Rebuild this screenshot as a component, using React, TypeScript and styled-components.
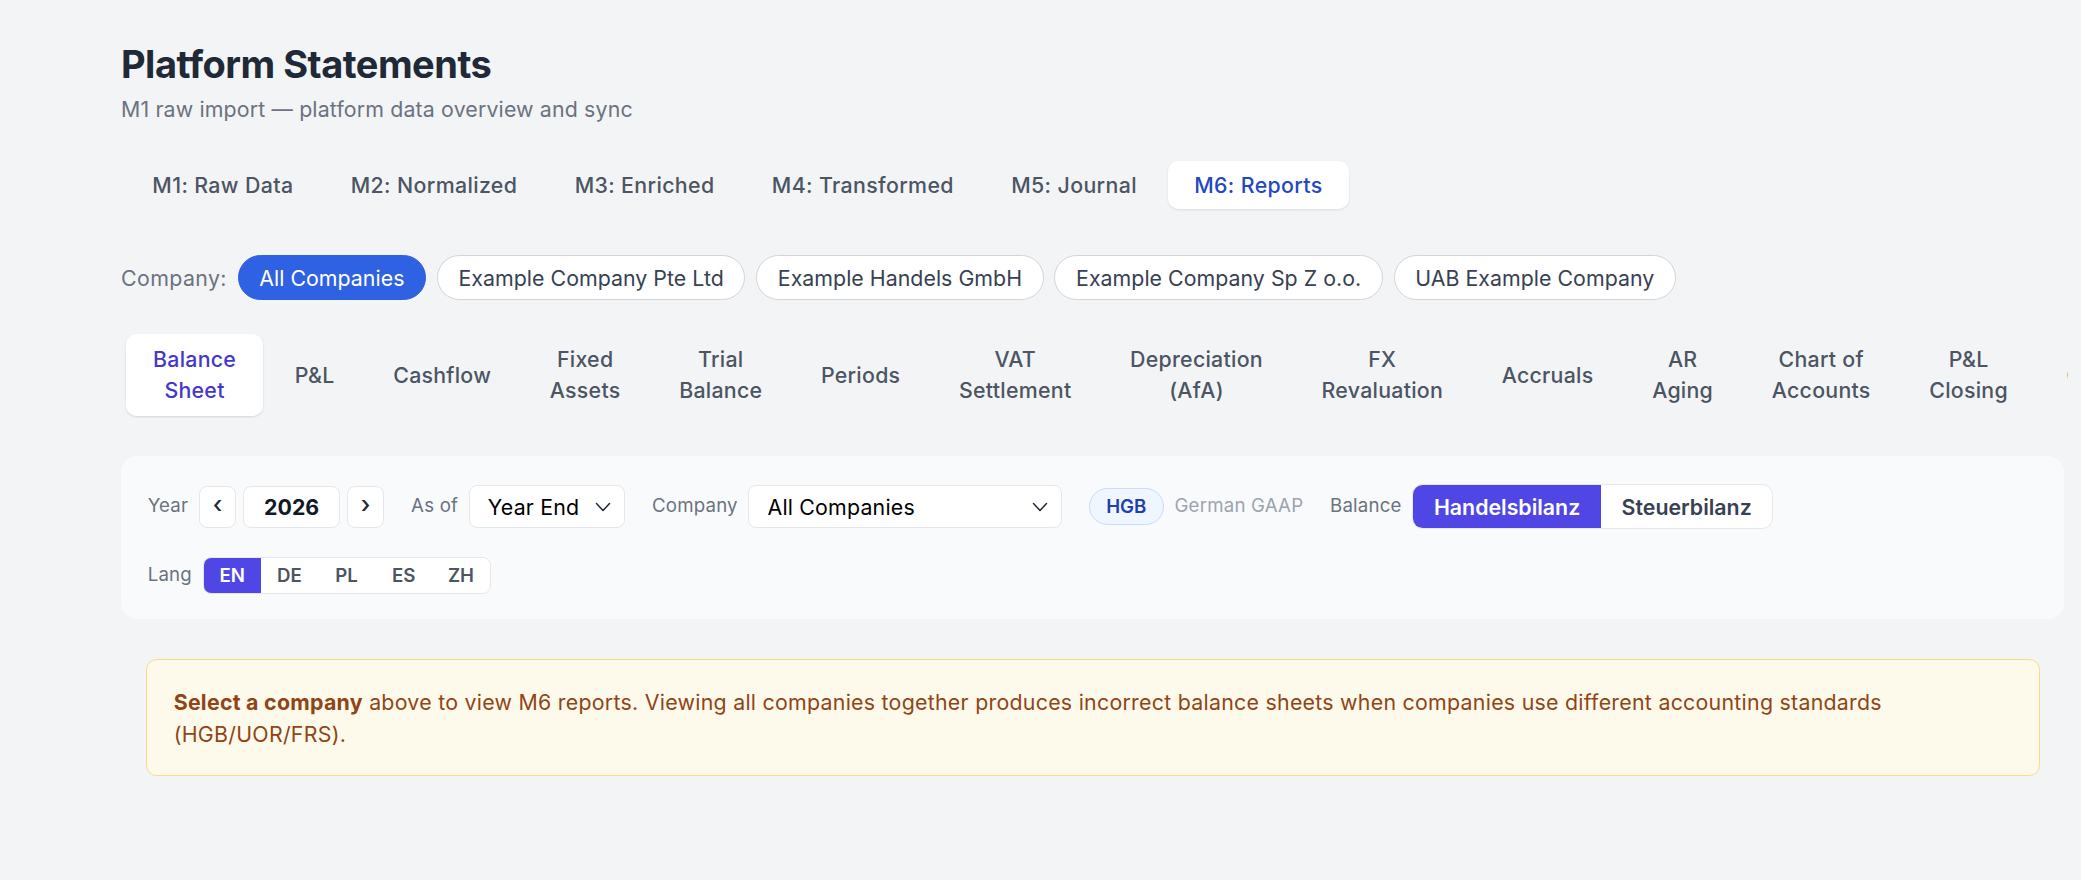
import React, { useState } from "react";
import styled, { createGlobalStyle } from "styled-components";

const GlobalStyle = createGlobalStyle`
  html, body {
    margin: 0;
    padding: 0;
    background: #f3f4f6;
  }
  body {
    font-family: Inter, "Noto Sans", "Liberation Sans", sans-serif;
    color: #1f2937;
    -webkit-font-smoothing: antialiased;
  }
  * { box-sizing: border-box; }
`;

const Page = styled.div`
  padding: 40px 17px 60px 121px;
  min-height: 880px;
`;

const Title = styled.h1`
  margin: 0;
  font-size: 38px;
  line-height: 48px;
  font-weight: 700;
  color: #1f2937;
  letter-spacing: -0.5px;
`;

const Subtitle = styled.p`
  margin: 5px 0 0;
  font-size: 21.33px;
  line-height: 32px;
  color: #6b7280;
  letter-spacing: 0.15px;
`;

const ModuleBar = styled.div`
  display: inline-flex;
  margin-top: 31px;
  padding: 5.33px;
  gap: 5.33px;
  border-radius: 13px;
  background: #f3f4f6;
`;

const ModuleTab = styled.button<{ $active?: boolean }>`
  border: none;
  font-family: inherit;
  font-size: 21.33px;
  line-height: 32px;
  font-weight: 500;
  letter-spacing: 0.37px;
  padding: 7.7px 26px;
  border-radius: 10.67px;
  cursor: pointer;
  background: ${(p) => (p.$active ? "#ffffff" : "transparent")};
  color: ${(p) => (p.$active ? "#2348c4" : "#4b5563")};
  box-shadow: ${(p) => (p.$active ? "0 1px 3px rgba(0,0,0,0.06), 0 1px 2px rgba(0,0,0,0.04)" : "none")};
`;

const CompanyRow = styled.div`
  display: flex;
  align-items: center;
  gap: 10.67px;
  margin-top: 41.3px;
`;

const RowLabel = styled.span`
  font-size: 21.33px;
  line-height: 32px;
  color: #6b7280;
  letter-spacing: 0.4px;
`;

const Pill = styled.button<{ $active?: boolean }>`
  font-family: inherit;
  font-size: 21.33px;
  line-height: 32px;
  letter-spacing: 0.03px;
  padding: 5.33px 20.7px;
  border-radius: 9999px;
  cursor: pointer;
  border: 1.33px solid ${(p) => (p.$active ? "#2f62e3" : "#d1d5db")};
  background: ${(p) => (p.$active ? "#2f62e3" : "#ffffff")};
  color: ${(p) => (p.$active ? "#ffffff" : "#374151")};
  white-space: nowrap;
`;

const ReportBar = styled.div`
  display: flex;
  margin: 28.5px -4px 0 0;
  padding: 5.33px;
  gap: 5.33px;
  overflow-x: auto;
  scrollbar-width: none;
  &::-webkit-scrollbar { display: none; }
`;

const ReportTab = styled.button<{ $active?: boolean }>`
  border: none;
  font-family: inherit;
  font-size: 21.33px;
  line-height: 30.67px;
  font-weight: 500;
  letter-spacing: 0.27px;
  padding: 10.67px 26.67px;
  border-radius: 10.67px;
  text-align: center;
  cursor: pointer;
  background: ${(p) => (p.$active ? "#ffffff" : "transparent")};
  color: ${(p) => (p.$active ? "#4338ca" : "#4b5563")};
  box-shadow: ${(p) => (p.$active ? "0 1px 3px rgba(0,0,0,0.08), 0 1px 2px rgba(0,0,0,0.05)" : "none")};
`;

const FilterPanel = styled.div`
  margin-top: 34.5px;
  background: #f9fafb;
  border-radius: 16px;
  padding: 28px 26.67px 25px;
  display: flex;
  flex-wrap: wrap;
  align-items: center;
  column-gap: 26.67px;
  row-gap: 28px;
`;

const Field = styled.div<{ $gap?: number }>`
  display: flex;
  align-items: center;
  gap: ${(p) => p.$gap ?? 10.67}px;
`;

const FieldLabel = styled.span<{ $muted?: boolean }>`
  font-size: 18.67px;
  line-height: 26.67px;
  letter-spacing: 0.2px;
  color: ${(p) => (p.$muted ? "#9ca3af" : "#6b7280")};
  white-space: nowrap;
`;

const NavButton = styled.button`
  width: 37.5px;
  height: 42px;
  border: 1.33px solid #e5e7eb;
  border-radius: 8px;
  background: #ffffff;
  font-family: inherit;
  font-size: 24px;
  line-height: 1;
  font-weight: 500;
  color: #1f2937;
  display: flex;
  align-items: center;
  justify-content: center;
  padding: 0 0 3px;
  cursor: pointer;
`;

const YearBox = styled.div`
  width: 96.5px;
  height: 42px;
  border: 1.33px solid #e5e7eb;
  border-radius: 8px;
  background: #ffffff;
  display: flex;
  align-items: center;
  justify-content: center;
  font-size: 21.33px;
  font-weight: 700;
  color: #111827;
`;

const SelectWrap = styled.div<{ $width: number }>`
  position: relative;
  width: ${(p) => p.$width}px;
  height: 43px;
`;

const Select = styled.select`
  appearance: none;
  -webkit-appearance: none;
  width: 100%;
  height: 100%;
  border: 1.33px solid #e5e7eb;
  border-radius: 8px;
  background: #ffffff;
  font-family: inherit;
  font-size: 21.33px;
  letter-spacing: 0.2px;
  color: #000000;
  padding: 0 40px 0 18px;
  outline: none;
`;

const Chevron = styled.svg`
  position: absolute;
  right: 14px;
  top: 50%;
  transform: translateY(-50%);
  pointer-events: none;
`;

const Badge = styled.span`
  display: inline-flex;
  align-items: center;
  height: 37px;
  padding: 0 16.5px;
  border-radius: 9999px;
  border: 1.33px solid #c7dbfb;
  background: #eff6ff;
  color: #1e40af;
  font-size: 18.67px;
  font-weight: 600;
`;

const Segmented = styled.div<{ $radius: number }>`
  display: flex;
  border: 1.33px solid #e5e7eb;
  border-radius: ${(p) => p.$radius}px;
  background: #ffffff;
  overflow: hidden;
`;

const Segment = styled.button<{ $active?: boolean; $size: "lg" | "sm" }>`
  border: none;
  font-family: inherit;
  cursor: pointer;
  font-weight: 600;
  background: ${(p) => (p.$active ? "#4f46e5" : "transparent")};
  color: ${(p) => (p.$active ? "#ffffff" : "#4b5563")};
  ${(p) =>
    p.$size === "lg"
      ? `font-size: 21.33px; height: 42.5px; padding: 0 20.7px; color: ${p.$active ? "#ffffff" : "#374151"};`
      : `font-size: 18.67px; height: 35.5px; width: 57.2px; padding: 0;`}
`;

const Alert = styled.div`
  margin: 40px 24px 0 25px;
  padding: 26px 26.67px 25px;
  border: 1.33px solid #f6dc86;
  border-radius: 10.67px;
  background: #fefaeb;
  color: #8f4516;
  font-size: 21.33px;
  line-height: 32px;
  letter-spacing: 0.27px;
`;

const Strong = styled.strong`
  font-weight: 700;
`;

const modules = ["M1: Raw Data", "M2: Normalized", "M3: Enriched", "M4: Transformed", "M5: Journal", "M6: Reports"];
const companies = [
  "All Companies",
  "Example Company Pte Ltd",
  "Example Handels GmbH",
  "Example Company Sp Z o.o.",
  "UAB Example Company",
];
const reports = [
  "Balance Sheet",
  "P&L",
  "Cashflow",
  "Fixed Assets",
  "Trial Balance",
  "Periods",
  "VAT Settlement",
  "Depreciation (AfA)",
  "FX Revaluation",
  "Accruals",
  "AR Aging",
  "Chart of Accounts",
  "P&L Closing",
  "Consolidation",
  "Intercompany",
];
const langs = ["EN", "DE", "PL", "ES", "ZH"];

const ChevronIcon = () => (
  <Chevron width="16" height="10" viewBox="0 0 16 10" fill="none">
    <polyline points="1.5,1.5 8,8.5 14.5,1.5" stroke="#1f2937" strokeWidth="1.5" strokeLinecap="round" strokeLinejoin="round" />
  </Chevron>
);

export default function App() {
  const [mod, setMod] = useState(5);
  const [company, setCompany] = useState(0);
  const [report, setReport] = useState(0);
  const [lang, setLang] = useState(0);
  const [bal, setBal] = useState(0);

  return (
    <Page>
      <GlobalStyle />
      <Title>Platform Statements</Title>
      <Subtitle>M1 raw import — platform data overview and sync</Subtitle>

      <ModuleBar>
        {modules.map((m, i) => (
          <ModuleTab key={m} $active={i === mod} onClick={() => setMod(i)}>
            {m}
          </ModuleTab>
        ))}
      </ModuleBar>

      <CompanyRow>
        <RowLabel>Company:</RowLabel>
        {companies.map((c, i) => (
          <Pill key={c} $active={i === company} onClick={() => setCompany(i)}>
            {c}
          </Pill>
        ))}
      </CompanyRow>

      <ReportBar>
        {reports.map((r, i) => (
          <ReportTab key={r} $active={i === report} onClick={() => setReport(i)}>
            {r}
          </ReportTab>
        ))}
      </ReportBar>

      <FilterPanel>
        <Field>
          <FieldLabel>Year</FieldLabel>
          <Field $gap={7}>
            <NavButton>‹</NavButton>
            <YearBox>2026</YearBox>
            <NavButton>›</NavButton>
          </Field>
        </Field>
        <Field>
          <FieldLabel>As of</FieldLabel>
          <SelectWrap $width={156.5}>
            <Select defaultValue="ye">
              <option value="ye">Year End</option>
            </Select>
            <ChevronIcon />
          </SelectWrap>
        </Field>
        <Field>
          <FieldLabel>Company</FieldLabel>
          <SelectWrap $width={313.5}>
            <Select defaultValue="all">
              <option value="all">All Companies</option>
            </Select>
            <ChevronIcon />
          </SelectWrap>
        </Field>
        <Field>
          <Badge>HGB</Badge>
          <FieldLabel $muted>German GAAP</FieldLabel>
        </Field>
        <Field>
          <FieldLabel>Balance</FieldLabel>
          <Segmented $radius={10.67}>
            {["Handelsbilanz", "Steuerbilanz"].map((b, i) => (
              <Segment key={b} $size="lg" $active={i === bal} onClick={() => setBal(i)}>
                {b}
              </Segment>
            ))}
          </Segmented>
        </Field>
        <Field>
          <FieldLabel>Lang</FieldLabel>
          <Segmented $radius={8}>
            {langs.map((l, i) => (
              <Segment key={l} $size="sm" $active={i === lang} onClick={() => setLang(i)}>
                {l}
              </Segment>
            ))}
          </Segmented>
        </Field>
      </FilterPanel>

      <Alert>
        <Strong>Select a company</Strong> above to view M6 reports. Viewing all companies together produces incorrect
        balance sheets when companies use different accounting standards (HGB/UOR/FRS).
      </Alert>
    </Page>
  );
}
